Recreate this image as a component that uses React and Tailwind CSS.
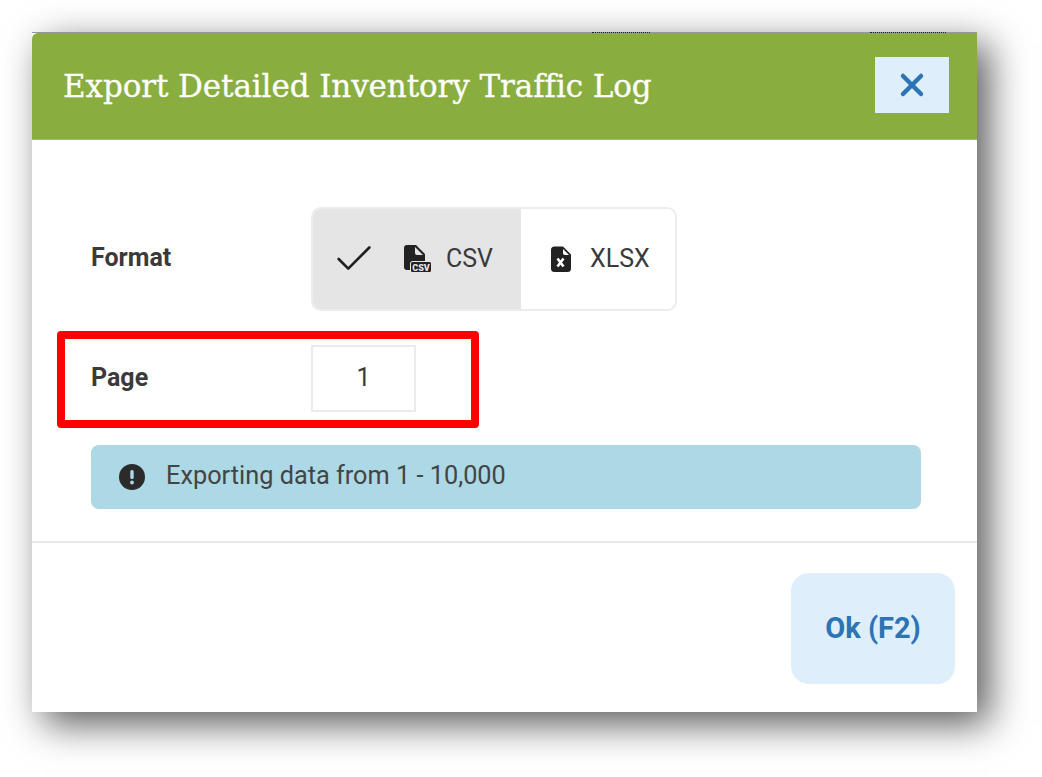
import React from "react";
import { Check, X } from "lucide-react";

function CsvIcon() {
  return (
    <svg width="30" height="30" viewBox="0 0 30 30" className="shrink-0">
      <path d="M3 4a3 3 0 0 1 3-3h9l9 9v7H12a3 3 0 0 0-3 3v6H6a3 3 0 0 1-3-3z" fill="#222" />
      <path d="M14 3v6a2 2 0 0 0 2 2h6z" fill="#e5e5e5" />
      <rect x="10" y="18" width="20" height="10" rx="1.5" fill="#222" />
      <text x="20" y="26.5" textAnchor="middle" fontSize="9" fontWeight="900" fill="#e5e5e5" fontFamily="Roboto, sans-serif">
        CSV
      </text>
    </svg>
  );
}

function XlsxIcon() {
  return (
    <svg width="22" height="26" viewBox="0 0 22 26" className="shrink-0">
      <path d="M1 4a3.500 3.500 0 0 1 3.500-3.500h8.500l8 8v14a3.500 3.500 0 0 1-3.500 3.500h-13a3.500 3.500 0 0 1-3.500-3.500z" fill="#222" />
      <path d="M13 3v4a2 2 0 0 0 2 2h4z" fill="#fff" />
      <path d="M7.500 12.500l6 8M13.500 12.500l-6 8" stroke="#fff" strokeWidth="2.600" />
    </svg>
  );
}

function AlertIcon() {
  return (
    <svg width="26" height="26" viewBox="0 0 26 26" className="shrink-0">
      <circle cx="13" cy="13" r="13" fill="#2b2b2b" />
      <rect x="11.300" y="6" width="3.400" height="9" rx="1.500" fill="#add8e6" />
      <circle cx="13" cy="18.500" r="1.900" fill="#add8e6" />
    </svg>
  );
}

export default function App() {
  return (
    <div className="w-[1042px] h-[777px] bg-white pl-8 pt-8 overflow-hidden font-['Roboto',sans-serif] text-[#3a3a3a]">
      <div className="relative w-[945px] h-[680px] bg-white flex flex-col shadow-[12px_12px_36px_0_rgba(0,0,0,0.65)]">
        {/* top edge, page behind the dialog peeks through */}
        <div className="h-px bg-[#9a96a0] relative">
          <div className="absolute left-[560px] top-0 w-[58px] border-t border-dotted border-[#222]"></div>
          <div className="absolute left-[838px] top-0 w-[76px] border-t border-dotted border-[#222]"></div>
        </div>
        <div className="h-[107px] bg-[#89ae3f] border-b border-[#9cc24f] flex items-center justify-between pl-[31px] pr-[28px] rounded-tl-[6px]">
          <h1 className="font-['DejaVu_Serif',serif] text-[31px] leading-none text-white tracking-[-0.1px] [-webkit-text-stroke:0.3px_white]">
            Export Detailed Inventory Traffic Log
          </h1>
          <button className="w-[74px] h-[56px] mb-[3px] bg-[#dfeefb] flex items-center justify-center text-[#2d74b5]">
            <X size={36} strokeWidth={3} />
          </button>
        </div>

        <div className="flex flex-col pl-[59px] pr-[56px] pt-[67px]">
          <div className="flex items-center h-[104px]">
            <div className="w-[220px] text-[25px] font-bold pb-[2px]">Format</div>
            <div className="flex w-[366px] h-[104px] rounded-[10px] border-2 border-[#ececec] overflow-hidden">
              <div className="w-[208px] bg-[#e5e5e5] flex items-center pl-[18px]">
                <Check size={46} strokeWidth={1.4} color="#222" className="mr-[24px]" />
                <CsvIcon />
                <span className="ml-[15px] text-[25px] pb-px">CSV</span>
              </div>
              <div className="flex-1 bg-white flex items-center pl-[29px]">
                <XlsxIcon />
                <span className="ml-[18px] text-[25px] pb-px">XLSX</span>
              </div>
            </div>
          </div>
          <div className="flex items-center h-[67px] mt-[34px]">
            <div className="w-[220px] text-[25px] font-bold pb-[2px]">Page</div>
            <div className="w-[105px] h-[67px] border-2 border-[#e8ecef] flex items-center justify-center text-[25px] pb-[2px]">1</div>
          </div>
          <div className="h-[64px] mt-[33px] bg-[#add8e6] rounded-[8px] flex items-center pl-[28px] text-[25.3px] text-[#444]">
            <AlertIcon />
            <span className="ml-[21px] pb-[3px]">Exporting data from 1 - 10,000</span>
          </div>
        </div>

        <div className="h-[2px] bg-[#e8e8ea] mt-[32px]"></div>
        <div className="flex justify-end pt-[30px] pr-[22px]">
          <button className="w-[164px] h-[111px] rounded-[18px] bg-[#dfeefb] text-[#2d74b5] text-[29px] font-bold">Ok (F2)</button>
        </div>

        {/* red annotation around the page row */}
        <div className="absolute left-[25px] top-[299px] w-[422px] h-[97px] border-[8px] border-[#ff0000] rounded-[4px]"></div>
      </div>
    </div>
  );
}
